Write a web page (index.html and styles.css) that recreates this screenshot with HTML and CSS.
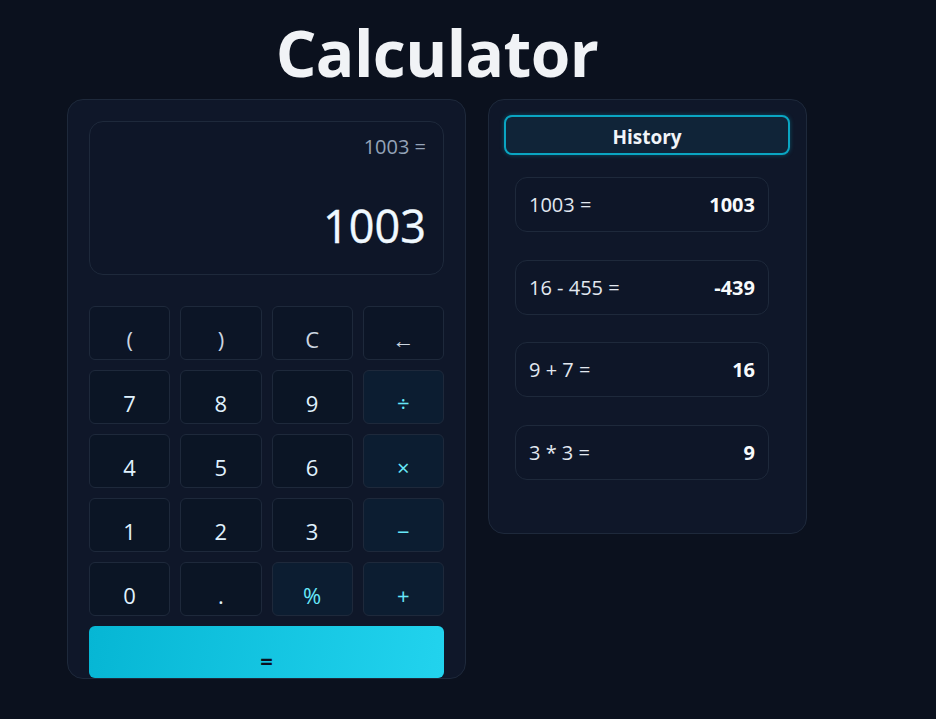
FILE: index.html
```html
<!DOCTYPE html>
<html lang="en">
<head>
<meta charset="utf-8">
<title>Calculator</title>
<link rel="stylesheet" href="styles.css">
</head>
<body>
<div class="app">
  <h1 class="title">Calculator</h1>
  <div class="panels">
    <section class="calc">
      <div class="display">
        <div class="expr">1003 =</div>
        <div class="result">1003</div>
      </div>
      <div class="keys">
        <button class="key fn">(</button>
        <button class="key fn">)</button>
        <button class="key fn">C</button>
        <button class="key fn">&larr;</button>
        <button class="key">7</button>
        <button class="key">8</button>
        <button class="key">9</button>
        <button class="key op">&divide;</button>
        <button class="key">4</button>
        <button class="key">5</button>
        <button class="key">6</button>
        <button class="key op">&times;</button>
        <button class="key">1</button>
        <button class="key">2</button>
        <button class="key">3</button>
        <button class="key op">&minus;</button>
        <button class="key">0</button>
        <button class="key">.</button>
        <button class="key op">%</button>
        <button class="key op">+</button>
      </div>
      <button class="equals">=</button>
    </section>
    <section class="history">
      <button class="history-tab">History</button>
      <ul class="history-list">
        <li class="entry"><span class="entry-expr">1003 =</span><span class="entry-val">1003</span></li>
        <li class="entry"><span class="entry-expr">16 - 455 =</span><span class="entry-val">-439</span></li>
        <li class="entry"><span class="entry-expr">9 + 7 =</span><span class="entry-val">16</span></li>
        <li class="entry"><span class="entry-expr">3 * 3 =</span><span class="entry-val">9</span></li>
      </ul>
    </section>
  </div>
</div>
</body>
</html>
```

FILE: styles.css
```css
* { box-sizing: border-box; }
html, body {
  margin: 0;
  padding: 0;
  background: #0b111e;
  font-family: "Open Sans", "Noto Sans", sans-serif;
  color: #e2e8f0;
}
.app {
  width: 740px;
  margin-left: 67px;
}
.title {
  margin: 9px 0 3px;
  text-align: center;
  font-size: 64px;
  font-weight: 700;
  line-height: normal;
  color: #f1f3f6;
  letter-spacing: -0.6px;
}
.panels {
  display: flex;
  gap: 22px;
  align-items: flex-start;
}
.calc {
  width: 399px;
  height: 580px;
  background: #0f1729;
  border: 1px solid #1e293b;
  border-radius: 16px;
  padding: 21px 21px 0;
}
.display {
  height: 154px;
  border: 1px solid #1e293b;
  border-radius: 14px;
  padding: 11px 17px 18px;
  display: flex;
  flex-direction: column;
  justify-content: space-between;
  align-items: flex-end;
  background: #0e1628;
}
.expr {
  font-size: 20px;
  color: #94a3b8;
  line-height: normal;
}
.result {
  font-size: 45px;
  font-weight: 500;
  color: #f0f9ff;
  line-height: normal;
  -webkit-text-stroke: 0.4px #f0f9ff;
}
.keys {
  margin-top: 31px;
  display: grid;
  grid-template-columns: repeat(4, 1fr);
  grid-auto-rows: 54px;
  gap: 10px;
}
.key {
  font-family: inherit;
  font-size: 22px;
  line-height: normal;
  padding: 12px 0 0;
  border: 1px solid #1e293b;
  border-radius: 6px;
  background: #0b1525;
  color: #e0f2fe;
  display: flex;
  align-items: center;
  justify-content: center;
}
.key.fn { color: #cbd5e1; background: #0c1526; }
.key.op { background: #0c1d31; color: #67e8f9; }
.equals {
  margin-top: 10px;
  width: 100%;
  height: 52px;
  border: none;
  border-radius: 6px;
  background: linear-gradient(100deg, #06b6d4, #22d3ee);
  color: #0b1120;
  font-family: inherit;
  font-size: 22px;
  font-weight: 700;
  padding: 15px 0 0;
}
.history {
  width: 319px;
  height: 435px;
  background: #0f1729;
  border: 1px solid #1e293b;
  border-radius: 16px;
  padding: 15px 16px 0 15px;
}
.history-tab {
  width: 100%;
  height: 40px;
  border: 2px solid #0aa5c2;
  border-radius: 8px;
  background: #102438;
  color: #f1f5f9;
  font-family: inherit;
  font-size: 19px;
  font-weight: 700;
  padding: 3px 0 0;
  box-shadow: 0 0 4px rgba(6, 182, 212, 0.35);
}
.history-list {
  list-style: none;
  margin: 22px 21px 0 11px;
  padding: 0;
  display: flex;
  flex-direction: column;
  gap: 27.5px;
}
.entry {
  height: 55px;
  border: 1px solid #1e293b;
  border-radius: 12px;
  background: #0e1628;
  padding: 0 13px 0 13px;
  display: flex;
  align-items: center;
  justify-content: space-between;
  font-size: 20px;
}
.entry-expr { color: #e2e8f0; }
.entry-val { color: #f8fafc; font-weight: 700; }
```
